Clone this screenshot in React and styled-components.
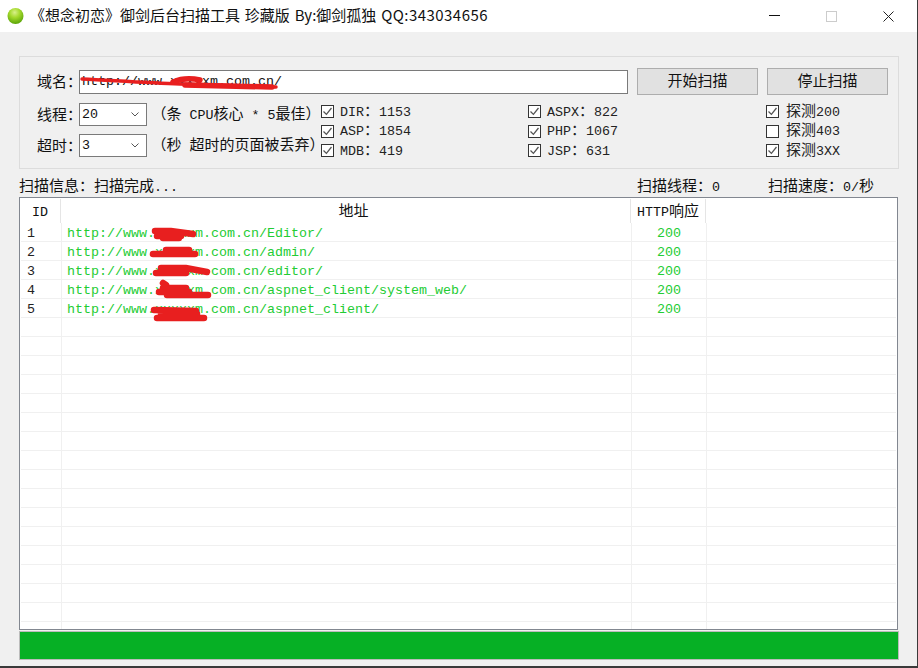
import React from "react";
import styled, { createGlobalStyle } from "styled-components";

const CJK = `"Noto Sans CJK SC", "Liberation Sans", sans-serif`;
const MONO = `"Liberation Mono", "Noto Sans CJK SC", monospace`;

const GlobalStyle = createGlobalStyle`
  html, body {
    margin: 0;
    padding: 0;
    background: #3a3a3a;
  }
  body {
    width: 918px;
    height: 668px;
    overflow: hidden;
    font-family: ${CJK};
    color: #111;
  }
`;

const Win = styled.div`
  width: 917px;
  height: 666px;
  background: #f0f0f0;
  display: flex;
  flex-direction: column;
`;

const TitleBar = styled.div`
  height: 32px;
  flex: none;
  background: #fff;
  display: flex;
  align-items: center;
  padding-left: 7px;
`;

const TitleText = styled.div`
  margin: 0 0 2px 6px;
  font-size: 15px;
  line-height: 30px;
  word-spacing: 1.5px;
  white-space: nowrap;
  color: #111;
  flex: 1;
`;

const TitleQQ = styled.span`
  letter-spacing: 0.45px;
`;

const WinBtn = styled.div`
  width: 57px;
  height: 30px;
  flex: none;
  display: flex;
  align-items: center;
  justify-content: center;
`;

const Body = styled.div`
  flex: 1;
  padding: 24px 18px 6px 19px;
  display: flex;
  flex-direction: column;
`;

const Group = styled.div`
  height: 113px;
  box-sizing: border-box;
  border: 1px solid #dcdcdc;
  width: 880px;
  padding: 11px 0 0 17px;
`;

const TopRow = styled.div`
  display: flex;
  align-items: center;
  height: 27px;
`;

const Label = styled.span`
  width: 42px;
  flex: none;
  font-size: 15px;
  line-height: 20px;
  white-space: nowrap;
  font-feature-settings: "halt";
  margin-bottom: 1px;
`;

const UrlBox = styled.div`
  position: relative;
  flex: none;
  width: 549px;
  height: 24px;
  box-sizing: border-box;
  border: 1px solid #7a7a7a;
  background: #fff;
  font-family: ${MONO};
  font-size: 13.33px;
  line-height: 21px;
  padding-left: 2px;
  margin-right: 9px;
`;

const ScanButton = styled.div`
  width: 121px;
  height: 27px;
  flex: none;
  box-sizing: border-box;
  border: 1px solid #adadad;
  background: #e1e1e1;
  font-size: 15px;
  line-height: 22px;
  text-align: center;
  margin-right: 9px;
`;

const OptionsRow = styled.div`
  display: grid;
  grid-template-columns: 284px 207px 238px 1fr;
  margin-top: 8px;
`;

const ThreadCol = styled.div`
  display: flex;
  flex-direction: column;
  gap: 8px;
`;

const ThreadRow = styled.div`
  display: flex;
  align-items: center;
  height: 23px;
  white-space: nowrap;
`;

const Select = styled.div`
  width: 68px;
  height: 23px;
  flex: none;
  box-sizing: border-box;
  border: 1px solid #7a7a7a;
  background: #fff;
  display: flex;
  align-items: center;
  justify-content: space-between;
  padding: 0 7px 0 2px;
  font-family: ${MONO};
  font-size: 13.33px;
`;

const Hint = styled.span`
  margin: 0 0 1px 12px;
  font-size: 15px;
  line-height: 20px;
  font-feature-settings: "halt";
`;

const Latin = styled.span`
  font-family: ${MONO};
  font-size: 13.33px;
  white-space: pre;
`;

const CheckCol = styled.div`
  display: flex;
  flex-direction: column;
  gap: 6.5px;
  padding-top: 2px;
`;

const CheckRow = styled.div`
  display: flex;
  align-items: center;
  height: 13px;
  white-space: nowrap;
  color: #222;
`;

const CheckText = styled.span`
  font-size: 15px;
  line-height: 13px;
  margin-bottom: 2px;
`;

const Box = styled.span`
  width: 13px;
  height: 13px;
  box-sizing: border-box;
  border: 1px solid #333;
  background: #fff;
  flex: none;
  margin-right: ${(p) => p.$gap}px;
  display: flex;
  align-items: center;
  justify-content: center;
`;

const StatusRow = styled.div`
  height: 28px;
  flex: none;
  display: flex;
  align-items: center;
  font-size: 15px;
  padding-top: 2px;
  box-sizing: border-box;
  white-space: nowrap;
`;

const StatusItem = styled.span`
  width: ${(p) => p.$w}px;
  flex: none;
`;

const Table = styled.div`
  width: 879px;
  height: 433px;
  flex: none;
  box-sizing: border-box;
  border: 1px solid #828790;
  background: #fff;
  overflow: hidden;
`;

const HeaderRow = styled.div`
  display: grid;
  grid-template-columns: 41px 570px 75px 1fr;
  height: 25px;
  font-size: 15px;
`;

const HeaderCell = styled.div`
  text-align: center;
  white-space: nowrap;
  border-right: ${(p) => (p.$last ? "none" : "1px solid #e5e5e5")};
  padding-left: ${(p) => p.$pad || 0}px;
  margin-top: 1px;
  height: 24px;
  line-height: 22px;
`;

const Row = styled.div`
  position: relative;
  display: grid;
  grid-template-columns: 41px 570px 75px 1fr;
  height: 19px;
  box-sizing: border-box;
  border-bottom: 1px solid #f0f0f0;
  margin: 0 1px;
  font-family: ${MONO};
  font-size: 13.33px;
  line-height: 18px;
  color: #22cc33;
`;

const Cell = styled.div`
  padding-left: ${(p) => p.$pad || 0}px;
  padding-top: 2px;
  box-sizing: border-box;
  text-align: ${(p) => (p.$center ? "center" : "left")};
  white-space: nowrap;
  border-right: ${(p) => (p.$last ? "none" : "1px solid #f0f0f0")};
  color: ${(p) => p.$color || "inherit"};
`;

const Scribble = styled.svg`
  position: absolute;
  left: 0;
  top: 0;
  z-index: 1;
  pointer-events: none;
  overflow: visible;
`;

const Progress = styled.div`
  width: 880px;
  height: 29px;
  flex: none;
  margin-top: 1px;
  box-sizing: border-box;
  border: 1px solid #bcbcbc;
  background: #06b025;
`;

const TickMark = () => (
  <svg width="9" height="9" viewBox="0 0 9 9">
    <path d="M0.5 4.5 L3.4 7.4 L8.5 1" fill="none" stroke="#555" strokeWidth="1.3" />
  </svg>
);

const Check = ({ on = true, gap = 6, children }) => (
  <CheckRow>
    <Box $gap={gap}>{on && <TickMark />}</Box>
    <CheckText>{children}</CheckText>
  </CheckRow>
);

const Arrow = () => (
  <svg width="8" height="5" viewBox="0 0 8 5">
    <path d="M0.5 0.5 L4 4 L7.5 0.5" fill="none" stroke="#555" strokeWidth="1" />
  </svg>
);

const AppIcon = () => (
  <svg width="17" height="18" viewBox="0 0 17 18">
    <defs>
      <radialGradient id="ball" cx="45%" cy="28%" r="70%">
        <stop offset="0%" stopColor="#d8f08a" />
        <stop offset="45%" stopColor="#a4d92c" />
        <stop offset="100%" stopColor="#5ea70a" />
      </radialGradient>
    </defs>
    <circle cx="8.5" cy="9" r="8" fill="url(#ball)" />
  </svg>
);

const scribbles = [
  "M134 8 L150 8 L172 11 M136 13 L160 13 M142 15 L158 15",
  "M145 8 L168 8 M132 12 L174 12",
  "M140 7 L165 7 L186 11 M135 12 L165 12",
  "M142 3 L145 5 M142 8 L165 8 M138 12 L168 12 M146 15 L187 15",
  "M133 11 L175 12 M136 19 L183 19 M140 15 L176 15",
];

const rows = [
  ["1", "http://www.xxxxxm.com.cn/Editor/"],
  ["2", "http://www.xxxxxm.com.cn/admin/"],
  ["3", "http://www.xxxxxm.com.cn/editor/"],
  ["4", "http://www.xxxxxm.com.cn/aspnet_client/system_web/"],
  ["5", "http://www.xxxxxm.com.cn/aspnet_client/"],
];

const blanks = Array.from({ length: 17 });

export default function App() {
  return (
    <>
      <GlobalStyle />
      <Win>
        <TitleBar>
          <AppIcon />
          <TitleText>
            《想念初恋》御剑后台扫描工具 珍藏版 By:御剑孤独 <TitleQQ>QQ:343034656</TitleQQ>
          </TitleText>
          <WinBtn>
            <svg width="11" height="2" viewBox="0 0 11 2">
              <rect width="11" height="1" fill="#111" />
            </svg>
          </WinBtn>
          <WinBtn>
            <svg width="11" height="11" viewBox="0 0 11 11">
              <rect x="0.5" y="0.5" width="10" height="10" fill="none" stroke="#ccc" />
            </svg>
          </WinBtn>
          <WinBtn>
            <svg width="11" height="11" viewBox="0 0 11 11">
              <path d="M0.5 0.5 L10.5 10.5 M10.5 0.5 L0.5 10.5" stroke="#222" strokeWidth="1" />
            </svg>
          </WinBtn>
        </TitleBar>
        <Body>
          <Group>
            <TopRow>
              <Label>域名：</Label>
              <UrlBox>
                http://www.xxxxxm.com.cn/
                <Scribble width="547" height="22">
                  <path
                    d="M2 8 C40 10 70 12 100 13 L196 16"
                    fill="none"
                    stroke="#e81f1f"
                    strokeWidth="3.5"
                    strokeLinecap="round"
                  />
                  <path
                    d="M93 11 C100 8 110 7 120 9 M105 14 L192 16"
                    fill="none"
                    stroke="#e81f1f"
                    strokeWidth="5.5"
                    strokeLinecap="round"
                  />
                </Scribble>
              </UrlBox>
              <ScanButton>开始扫描</ScanButton>
              <ScanButton>停止扫描</ScanButton>
            </TopRow>
            <OptionsRow>
              <ThreadCol>
                <ThreadRow>
                  <Label>线程：</Label>
                  <Select>
                    20
                    <Arrow />
                  </Select>
                  <Hint>
                    （条<Latin> CPU</Latin>核心<Latin> * 5</Latin>最佳）
                  </Hint>
                </ThreadRow>
                <ThreadRow>
                  <Label>超时：</Label>
                  <Select>
                    3
                    <Arrow />
                  </Select>
                  <Hint>
                    （秒<Latin> </Latin>超时的页面被丢弃）
                  </Hint>
                </ThreadRow>
              </ThreadCol>
              <CheckCol>
                <Check>
                  <Latin>DIR</Latin>：<Latin>1153</Latin>
                </Check>
                <Check>
                  <Latin>ASP</Latin>：<Latin>1854</Latin>
                </Check>
                <Check>
                  <Latin>MDB</Latin>：<Latin>419</Latin>
                </Check>
              </CheckCol>
              <CheckCol>
                <Check>
                  <Latin>ASPX</Latin>：<Latin>822</Latin>
                </Check>
                <Check>
                  <Latin>PHP</Latin>：<Latin>1067</Latin>
                </Check>
                <Check>
                  <Latin>JSP</Latin>：<Latin>631</Latin>
                </Check>
              </CheckCol>
              <CheckCol>
                <Check gap={7}>
                  探测<Latin>200</Latin>
                </Check>
                <Check on={false} gap={7}>
                  探测<Latin>403</Latin>
                </Check>
                <Check gap={7}>
                  探测<Latin>3XX</Latin>
                </Check>
              </CheckCol>
            </OptionsRow>
          </Group>
          <StatusRow>
            <StatusItem $w={618}>
              扫描信息：扫描完成<Latin>...</Latin>
            </StatusItem>
            <StatusItem $w={131}>
              扫描线程：<Latin>0</Latin>
            </StatusItem>
            <StatusItem $w={120}>
              扫描速度：<Latin>0/</Latin>秒
            </StatusItem>
          </StatusRow>
          <Table>
            <HeaderRow>
              <HeaderCell>
                <Latin>ID</Latin>
              </HeaderCell>
              <HeaderCell $pad={16}>地址</HeaderCell>
              <HeaderCell>
                <Latin>HTTP</Latin>响应
              </HeaderCell>
              <HeaderCell $last />
            </HeaderRow>
            {rows.map(([id, url], i) => (
              <Row key={id}>
                <Cell $pad={6} $color="#222">
                  {id}
                </Cell>
                <Cell $pad={5}>{url}</Cell>
                <Cell $center>200</Cell>
                <Cell $last />
                <Scribble width="300" height="19">
                  <path
                    d={scribbles[i]}
                    fill="none"
                    stroke="#e81f1f"
                    strokeWidth="6.5"
                    strokeLinecap="round"
                  />
                </Scribble>
              </Row>
            ))}
            {blanks.map((_, i) => (
              <Row key={i}>
                <Cell />
                <Cell />
                <Cell />
                <Cell $last />
              </Row>
            ))}
          </Table>
          <Progress />
        </Body>
      </Win>
    </>
  );
}
